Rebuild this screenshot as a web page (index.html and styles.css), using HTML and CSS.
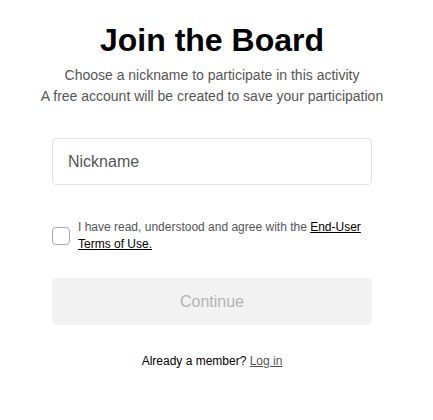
FILE: index.html
```html
<!DOCTYPE html>
<html>
<head>
<meta charset="utf-8">
<link rel="stylesheet" href="styles.css">
</head>
<body>
<div class="page">
  <h1 class="title">Join the Board</h1>
  <p class="sub">Choose a nickname to participate in this activity<br>A free account will be created to save your participation</p>
  <div class="form">
    <input class="field" type="text" placeholder="Nickname">
    <label class="agree">
      <span class="box"></span>
      <span class="agree-text">I have read, understood and agree with the <a class="terms" href="#">End-User Terms of Use.</a></span>
    </label>
    <button class="continue" disabled>Continue</button>
  </div>
  <p class="member">Already a member? <a class="login" href="#">Log in</a></p>
</div>
</body>
</html>
```
FILE: styles.css
```css
html, body {
  margin: 0;
  padding: 0;
  background: #fff;
}
body {
  font-family: "Liberation Sans", Arial, sans-serif;
}
.page {
  width: 424px;
  display: flex;
  flex-direction: column;
  align-items: center;
  padding-top: 20px;
}
.title {
  margin: 0;
  font-size: 32px;
  font-weight: bold;
  line-height: 40px;
  color: #000;
}
.sub {
  margin: 5px 0 0;
  font-size: 14px;
  line-height: 21px;
  color: #555;
  text-align: center;
}
.form {
  width: 320px;
  display: flex;
  flex-direction: column;
  margin-top: 31px;
}
.field {
  box-sizing: border-box;
  width: 320px;
  height: 47px;
  border: 1px solid #e3e3e3;
  border-radius: 4px;
  padding: 0 15px;
  font-family: "Liberation Sans", Arial, sans-serif;
  font-size: 16px;
  color: #333;
  outline: none;
}
.field::placeholder {
  color: #555;
}
.agree {
  display: flex;
  align-items: center;
  gap: 8px;
  margin-top: 34px;
}
.box {
  flex: none;
  box-sizing: border-box;
  width: 18px;
  height: 18px;
  border: 1px solid #aaa;
  border-radius: 4px;
}
.agree-text {
  font-size: 12px;
  line-height: 17px;
  color: #555;
}
.terms {
  color: #000;
  text-decoration: underline;
}
.continue {
  margin-top: 25px;
  height: 47px;
  border: none;
  border-radius: 5px;
  background: #f2f2f2;
  color: #b3b3b3;
  font-family: "Liberation Sans", Arial, sans-serif;
  font-size: 16px;
}
.member {
  margin: 27px 0 0;
  font-size: 12px;
  line-height: 18px;
  color: #000;
}
.login {
  color: #555;
  text-decoration: underline;
}
```
